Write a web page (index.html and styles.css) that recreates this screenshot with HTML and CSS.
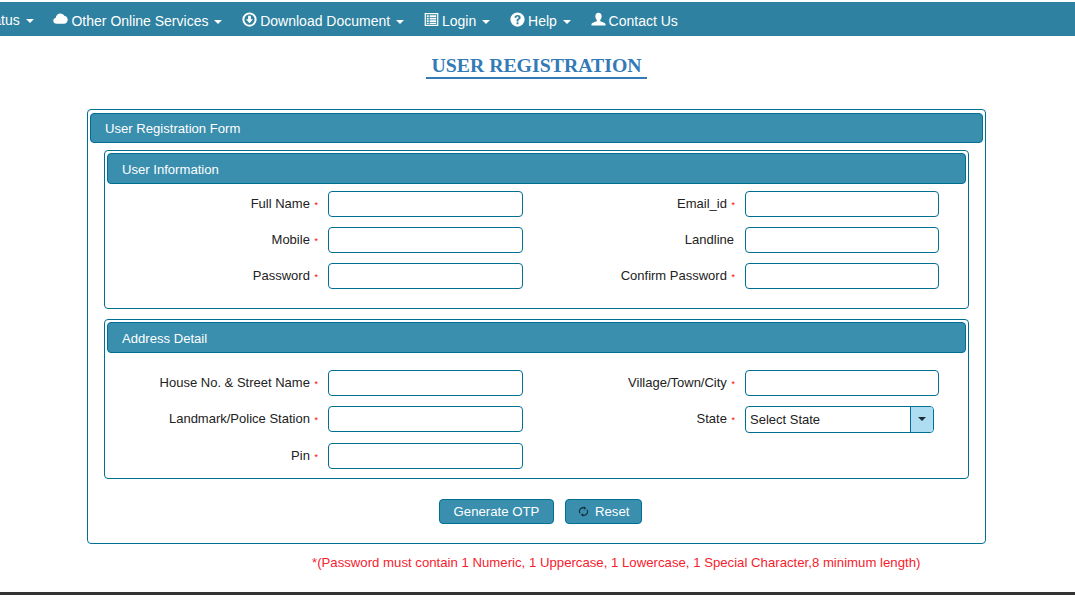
FILE: index.html
```html
<!DOCTYPE html>
<html>
	<head>
		<meta charset=utf-8>
		<meta name="viewport" content="width=device-width, initial-scale=1">
		<title>User Registration</title>
		<link rel="stylesheet" href="styles.css">
	</head>
	<body>
		<nav class="navbar">
			<a class="nav-item nav-first">Status <span class="caret"></span></a>
			<a class="nav-item">
				<svg class="icon icon-cloud" viewBox="0 0 16 16"><path fill="#fff" d="M4 12.500C1.800 12.500 .3 11 .3 9.200c0-1.600 1.100-2.900 2.700-3.200C3.200 3.400 5.300 1.500 7.900 1.500c2 0 3.600 1 4.400 2.700 2.200 .1 3.400 2 3.400 4.100 0 2.300-1.700 4.200-4 4.200z"/></svg>
				Other Online Services <span class="caret"></span></a>
			<a class="nav-item">
				<svg class="icon" viewBox="0 0 16 16"><path fill="#fff" fill-rule="evenodd" d="M8 .4a7.600 7.600 0 1 0 0 15.200A7.600 7.600 0 0 0 8 .4zm0 2.100a5.500 5.500 0 1 1 0 11 5.500 5.500 0 0 1 0-11zM6.500 4h3v3.800h2.200L8 12 4.300 7.800h2.200z"/></svg>
				Download Document <span class="caret"></span></a>
			<a class="nav-item">
				<svg class="icon" viewBox="0 0 16 16"><path fill="#fff" fill-rule="evenodd" d="M.7 1h14.600v14H.7zM2 2.300v11.400h12V2.300zM3 3.500h2v1.800H3zM6 3.500h7v1.800H6zM3 6.200h2v1.800H3zM6 6.200h7v1.800H6zM3 8.900h2v1.800H3zM6 8.900h7v1.800H6zM3 11.400h2v1.300H3zM6 11.400h7v1.300H6z"/></svg>
				Login <span class="caret"></span></a>
			<a class="nav-item">
				<svg class="icon" viewBox="0 0 16 16"><path fill="#fff" fill-rule="evenodd" d="M8 .4a7.600 7.600 0 1 0 0 15.200A7.600 7.600 0 0 0 8 .4zM7 11h2v2H7zM4.800 6.200C4.900 4.200 6.200 3.200 8.200 3.200c1.900 0 3.200 1 3.200 2.600 0 1.200-.7 1.800-1.500 2.300-.7 .5-.9 .8-.9 1.500v.4H7v-.6c0-1.200 .4-1.800 1.200-2.300 .6-.4 1-.7 1-1.300 0-.6-.4-1-1.100-1-.7 0-1.200 .5-1.200 1.300z"/></svg>
				Help <span class="caret"></span></a>
			<a class="nav-item">
				<svg class="icon" viewBox="0 0 16 16"><path fill="#fff" d="M8 .8c2.100 0 3.400 1.700 3.400 3.800 0 1.600-.7 3-1.600 3.800v1.300c.3 .7 4.200 1.200 5.700 3.100v1.700H.5v-1.700c1.500-1.900 5.400-2.400 5.700-3.100V8.400C5.300 7.600 4.600 6.200 4.600 4.600 4.600 2.500 5.900 .8 8 .8z"/></svg>
				Contact Us</a>
		</nav>

		<div class="page-title-wrap">
			<h2 class="page-title">USER REGISTRATION</h2>
		</div>

		<form class="panel outer-panel">
			<div class="panel-heading main-heading">User Registration Form</div>

			<div class="panel inner-panel info-panel">
				<div class="panel-heading">User Information</div>
				<div class="form-grid">
					<label class="field-label">Full Name <span class="req">*</span></label>
					<input class="field" type="text">
					<label class="field-label">Email_id <span class="req">*</span></label>
					<input class="field" type="text">

					<label class="field-label">Mobile <span class="req">*</span></label>
					<input class="field" type="text">
					<label class="field-label no-req">Landline</label>
					<input class="field" type="text">

					<label class="field-label">Password <span class="req">*</span></label>
					<input class="field" type="password">
					<label class="field-label">Confirm Password <span class="req">*</span></label>
					<input class="field" type="password">
				</div>
			</div>

			<div class="panel inner-panel address-panel">
				<div class="panel-heading">Address Detail</div>
				<div class="form-grid address-grid">
					<label class="field-label">House No. &amp; Street Name <span class="req">*</span></label>
					<input class="field" type="text">
					<label class="field-label">Village/Town/City <span class="req">*</span></label>
					<input class="field" type="text">

					<label class="field-label">Landmark/Police Station <span class="req">*</span></label>
					<input class="field" type="text">
					<label class="field-label">State <span class="req">*</span></label>
					<div class="combo">
						<span class="combo-text">Select State</span>
						<span class="combo-btn"><span class="combo-caret"></span></span>
					</div>

					<label class="field-label">Pin <span class="req">*</span></label>
					<input class="field" type="text">
				</div>
			</div>

			<div class="btn-row">
				<button class="btn" type="button">Generate OTP</button>
				<button class="btn btn-reset" type="button">
					<svg class="btn-icon" viewBox="0 0 16 16"><path fill="none" stroke="#12303c" stroke-width="1.700" d="M3 10.500A5.300 5.300 0 0 1 10 3M13 5.500A5.300 5.300 0 0 1 6 13"/><path fill="#12303c" d="M8.500 .5l3.500 2.600-3.500 2.400zM7.500 10.500L4 12.900l3.500 2.600z"/></svg>
					Reset
				</button>
			</div>
		</form>

		<p class="pw-note">*(Password must contain 1 Numeric, 1 Uppercase, 1 Lowercase, 1 Special Character,8 minimum length)</p>

		<div class="footer-bar"></div>
	</body>
</html>
```

FILE: styles.css
```css
html, body { height: 595px; }
body {
	margin: 0;
	padding: 2px 0 0;
	box-sizing: border-box;
	overflow: hidden;
	position: relative;
	font-family: "Liberation Sans", Arial, sans-serif;
	font-size: 13px;
	color: #333;
	background: #fff;
}

.navbar {
	display: flex;
	box-sizing: border-box;
	height: 34px;
	padding-top: 2px;
	align-items: center;
	font-size: 14px;
	background: #2e81a0;
	color: #fff;
	white-space: nowrap;
}
.nav-item { margin-right: 19px; }
.nav-first { margin-left: -20px; }
.icon {
	width: 15px; height: 15px;
	margin: 0 -1px 0 1px;
	vertical-align: -1px;
}
.icon-cloud { margin: 0; }
.caret {
	display: inline-block;
	width: 0; height: 0;
	margin-left: 2px;
	vertical-align: middle;
	border-top: 4px solid #fff;
	border-left: 4px solid transparent;
	border-right: 4px solid transparent;
}

.page-title-wrap {
	display: flex;
	justify-content: center;
	padding: 18px 2px 0 0;
}
.page-title {
	margin: 0;
	padding: 0 5px;
	font-family: "Liberation Serif", "Times New Roman", serif;
	font-size: 19.800px;
	line-height: 23px;
	font-weight: bold;
	color: #337ab7;
	border-bottom: 2px solid #337ab7;
}

.panel {
	border: 1px solid #006f94;
	border-radius: 4px;
	background: #fff;
}
.outer-panel {
	box-sizing: border-box;
	width: 899px;
	height: 435px;
	margin: 30px 0 0 87px;
	padding: 3px 2px;
}
.panel-heading {
	box-sizing: border-box;
	height: 31px;
	padding: 1px 14px 0;
	font-size: 13.100px;
	line-height: 29px;
	color: #fff;
	background: #3a8eae;
	border: 1px solid #006f94;
	border-radius: 4px;
}
.main-heading {
	height: 30px;
	line-height: 28px;
}
.inner-panel {
	box-sizing: border-box;
	width: 865px;
	margin-left: 14px;
	padding: 2px;
}
.info-panel { height: 159px; margin-top: 7px; }
.address-panel { height: 160px; margin-top: 10px; }

.form-grid {
	display: grid;
	grid-template-columns: 221px 195px 222px 194px;
	grid-auto-rows: 26px;
	row-gap: 10px;
	margin-top: 7px;
	align-items: center;
}
.address-grid {
	margin-top: 17px;
	grid-template-rows: 26px 27px 26px;
}
.field-label {
	padding-right: 10px;
	padding-bottom: 2px;
	text-align: right;
	color: #222;
}
.no-req { padding-right: 11px; }
.req {
	color: #f00;
	font-size: 9px;
	margin-left: 1px;
}
.field {
	box-sizing: border-box;
	align-self: start;
	width: 100%;
	height: 26px;
	margin: 0;
	padding: 0 4px;
	border: 1px solid #006f94;
	border-radius: 4px;
	background: #fff;
}
.combo {
	box-sizing: border-box;
	align-self: start;
	display: flex;
	width: 189px;
	height: 27px;
	border: 1px solid #006f94;
	border-radius: 4px;
	overflow: hidden;
}
.combo-text {
	flex: 1;
	padding-left: 4px;
	line-height: 25px;
	color: #222;
}
.combo-btn {
	display: flex;
	width: 23px;
	padding-top: 10px;
	box-sizing: border-box;
	justify-content: center;
	background: #aedcf0;
	border-left: 1px solid #006f94;
}
.combo-caret {
	width: 0; height: 0;
	border-top: 4px solid #1c2b33;
	border-left: 4px solid transparent;
	border-right: 4px solid transparent;
}

.btn-row {
	display: flex;
	justify-content: center;
	gap: 11px;
	margin-top: 20px;
	padding-left: 8px;
}
.btn {
	height: 25px;
	padding: 0 14px;
	font-family: inherit;
	font-size: 13.200px;
	color: #fff;
	background: #3a8eae;
	border: 1px solid #006f94;
	border-radius: 4px;
}
.btn-reset { padding: 0 12px; }
.btn-icon {
	width: 11px; height: 11px;
	vertical-align: -1px;
	margin-right: 2px;
}

.pw-note {
	margin: 11px 0 0 312px;
	font-size: 13.200px;
	color: #f5222d;
	line-height: 16px;
}
.footer-bar {
	position: absolute;
	left: 0; right: 0; bottom: 0;
	height: 3px;
	background: #333;
}
```
